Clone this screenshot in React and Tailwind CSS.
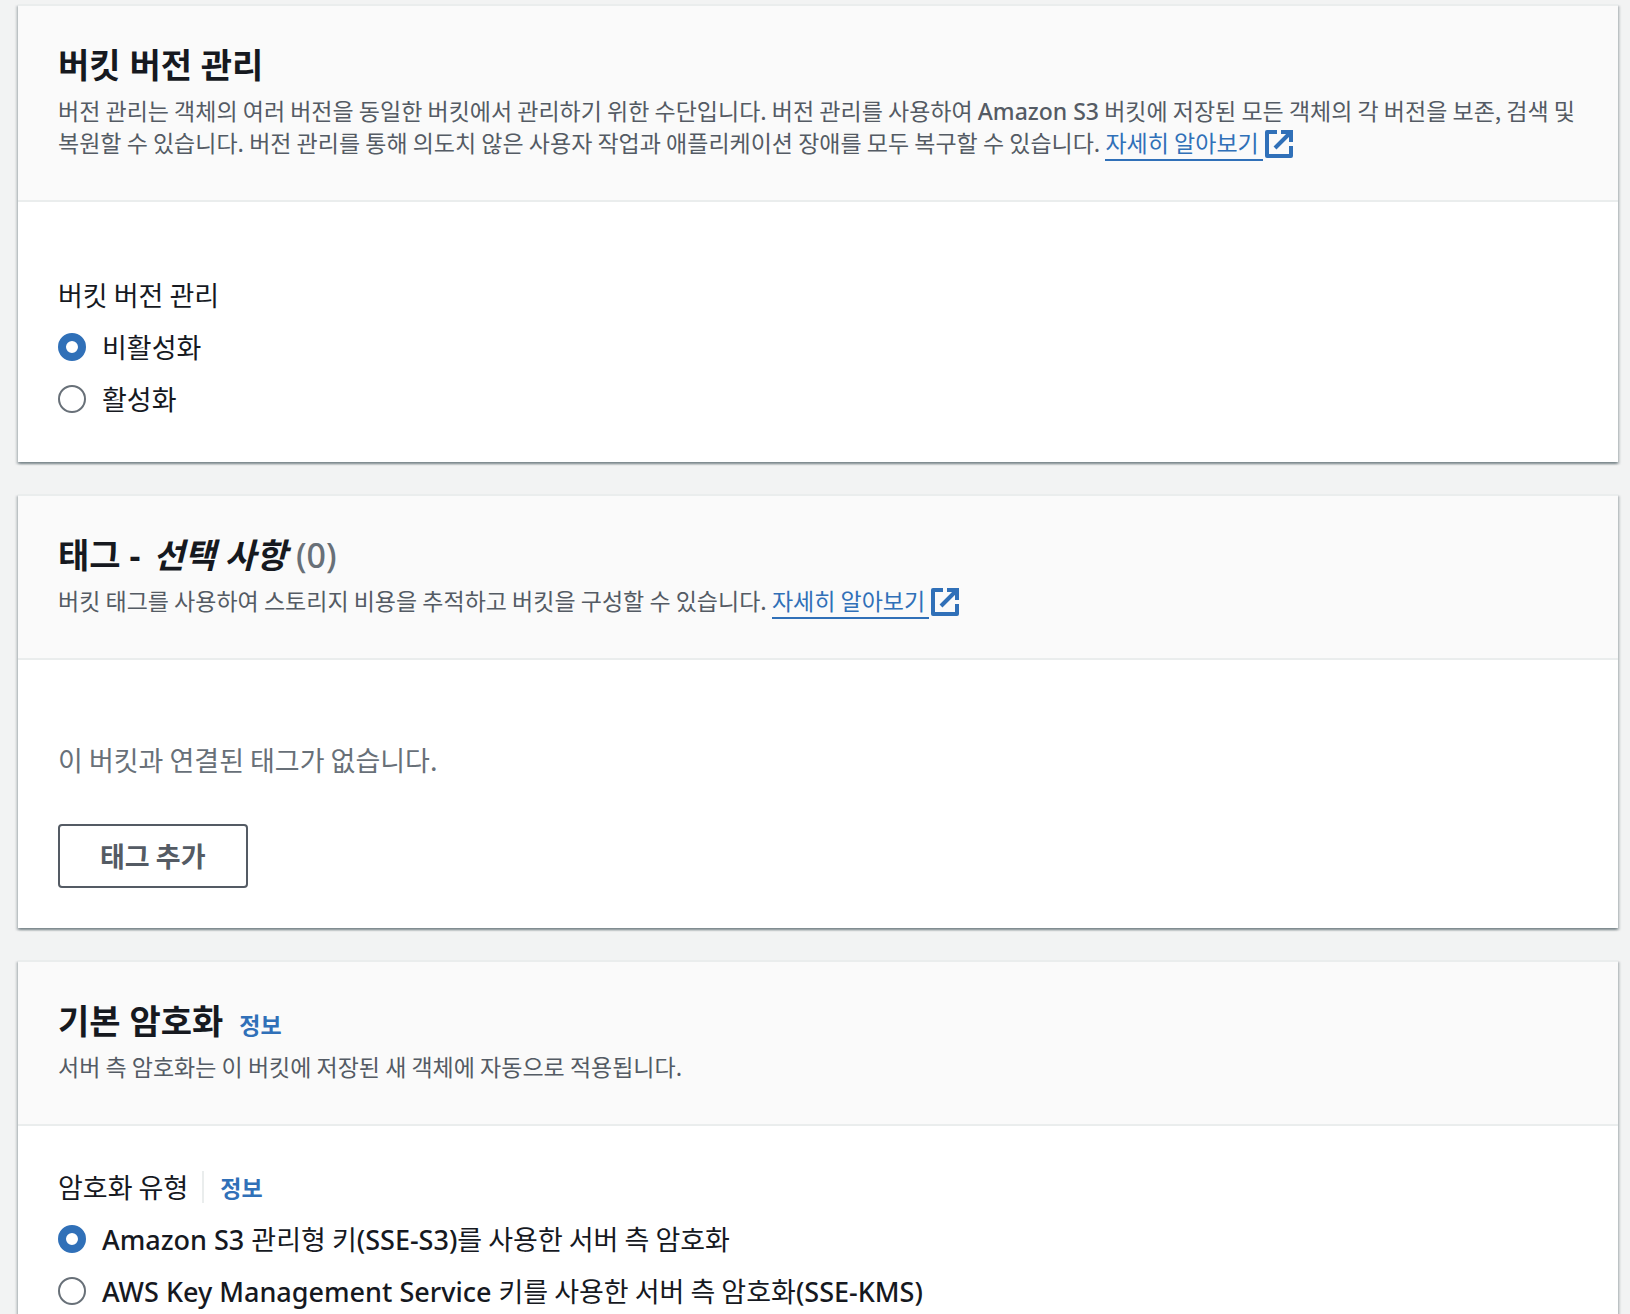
// App.jsx
import { useState } from 'react'

// Latin words inside Korean text
function Latin({ children }) {
    return <span className="leading-none font-medium font-['Noto_Sans',sans-serif]">{children}</span>
}

function ExternalLink({ children }) {
    return (
        <a href="#" className="text-[#3070b8] whitespace-nowrap">
            <span className="border-b-2 border-[#3070b8] pr-1">{children}</span>
            <svg viewBox="0 0 28 28" className="inline-block align-middle ml-0.5 -mt-2 -mb-1 w-7 h-7" fill="none" stroke="currentColor" strokeWidth="4" strokeLinejoin="round">
                <path d="M12 2H2v24h24V16" />
                <path d="M16 2h10v10" strokeLinejoin="miter" />
                <path d="M25 3L10 18" />
            </svg>
        </a>
    )
}

function Panel({ title, description, bodyClass, children }) {
    return (
        <section className="last:grow bg-white border-t-2 border-[#eaeded] shadow-[0_2px_2px_0_#001c244d,2px_2px_2px_0_#001c2426,-2px_2px_2px_0_#001c2426]">
            <header className="bg-[#fafafa] border-b-2 border-[#eaeded] pl-10 pr-8 pt-[37px] pb-[42px]">
                <h2 className="text-[34px] leading-[44px] font-bold font-['Noto_Sans','Noto_Sans_CJK_KR',sans-serif]">{title}</h2>
                <p className="mt-[7px] text-[23px] leading-8 break-keep text-[#545b64]">{description}</p>
            </header>
            <div className={bodyClass}>{children}</div>
        </section>
    )
}

function RadioGroup({ name, options, value, onChange }) {
    return (
        <div className="mt-3 flex flex-col gap-3">
            {options.map(option => (
                <label key={option.id} className="flex items-center gap-4 leading-10">
                    <input
                        type="radio"
                        name={name}
                        value={option.id}
                        checked={value === option.id}
                        onChange={() => onChange(option.id)}
                        className="appearance-none shrink-0 w-7 h-7 rounded-full bg-white border-2 border-[#687078] checked:border-8 checked:border-[#3070b8]"
                    />
                    <span>{option.label}</span>
                </label>
            ))}
        </div>
    )
}

const versioningOptions = [
    { id: 'disabled', label: '비활성화' },
    { id: 'enabled', label: '활성화' },
]

const encryptionOptions = [
    {
        id: 'sse-s3',
        label: <><Latin>Amazon S3 </Latin>관리형 키<Latin>(SSE-S3)</Latin>를 사용한 서버 측 암호화</>,
    },
    {
        id: 'sse-kms',
        label: <><Latin>AWS Key Management Service </Latin>키를 사용한 서버 측 암호화<Latin>(SSE-KMS)</Latin></>,
    },
]

export default function App() {
    const [versioning, setVersioning] = useState('disabled')
    const [encryption, setEncryption] = useState('sse-s3')

    return (
        <main className="min-h-screen bg-[#f2f3f3] pt-1 pl-[18px] pr-3 flex flex-col gap-8 text-[27px] leading-10 text-[#16191f] font-['Noto_Sans_CJK_KR',sans-serif]">
            <Panel
                title="버킷 버전 관리"
                description={
                    <>
                        버전 관리는 객체의 여러 버전을 동일한 버킷에서 관리하기 위한 수단입니다. 버전 관리를 사용하여 <Latin>Amazon S3</Latin> 버킷에 저장된 모든 객체의 각 버전을 보존, 검색 및 복원할 수 있습니다. 버전 관리를 통해 의도치 않은 사용자 작업과 애플리케이션 장애를 모두 복구할 수 있습니다.{' '}
                        <ExternalLink>자세히 알아보기</ExternalLink>
                    </>
                }
                bodyClass="px-10 pt-[73px] pb-[43px]"
            >
                <fieldset>
                    <legend>버킷 버전 관리</legend>
                    <RadioGroup name="versioning" options={versioningOptions} value={versioning} onChange={setVersioning} />
                </fieldset>
            </Panel>

            <Panel
                title={
                    <>
                        태그 - <em className="ml-1">선택 사항</em> <span className="font-medium text-[#687078]">(0)</span>
                    </>
                }
                description={
                    <>
                        버킷 태그를 사용하여 스토리지 비용을 추적하고 버킷을 구성할 수 있습니다.{' '}
                        <ExternalLink>자세히 알아보기</ExternalLink>
                    </>
                }
                bodyClass="px-10 pt-20 pb-10"
            >
                <p className="text-[#687078]">이 버킷과 연결된 태그가 없습니다.</p>
                <button type="button" className="block mt-11 h-16 px-10 border-2 border-[#545b64] rounded-sm font-bold text-[#545b64]">
                    태그 추가
                </button>
            </Panel>

            <Panel
                title={
                    <>
                        기본 암호화
                        <a href="#" className="ml-4 text-[23px] leading-none text-[#3070b8]">정보</a>
                    </>
                }
                description="서버 측 암호화는 이 버킷에 저장된 새 객체에 자동으로 적용됩니다."
                bodyClass="px-10 pt-[41px]"
            >
                <fieldset>
                    <legend className="flex items-center">
                        암호화 유형
                        <a href="#" className="ml-3.5 pl-4 border-l-2 border-[#eaeded] text-[23px] leading-8 font-bold text-[#3070b8]">정보</a>
                    </legend>
                    <RadioGroup name="encryption" options={encryptionOptions} value={encryption} onChange={setEncryption} />
                </fieldset>
            </Panel>
        </main>
    )
}
